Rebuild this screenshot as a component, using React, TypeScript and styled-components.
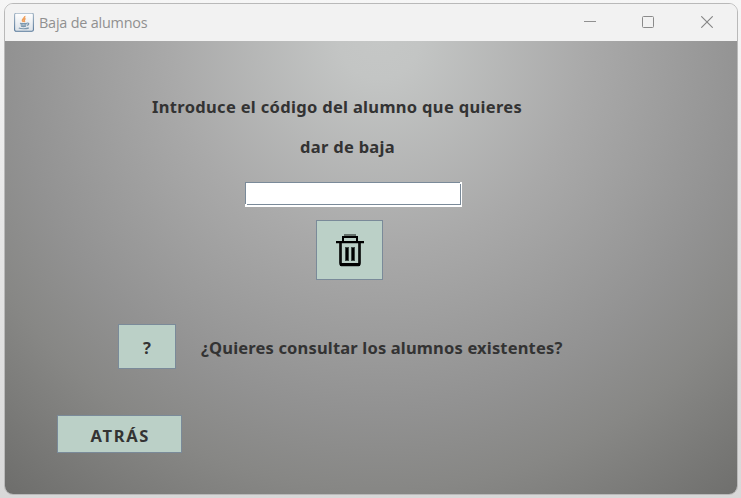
import React from "react";
import styled, { createGlobalStyle } from "styled-components";

const GlobalStyle = createGlobalStyle`
  * { box-sizing: border-box; }
  body { margin: 0; background: #e9e9e9; overflow: hidden; }
`;

const Desktop = styled.div`
  width: 741px;
  height: 498px;
  padding: 3px 3px 3px 4px;
  background: linear-gradient(#f6f6f6 0, #e6e6e6 45%, #d8d8d8 100%);
`;

const Window = styled.main`
  width: 734px;
  height: 492px;
  border: 1px solid #b9b9b9;
  border-radius: 9px;
  overflow: hidden;
  display: flex;
  flex-direction: column;
  background: #f2f2f2;
`;

const TitleBar = styled.header`
  height: 37px;
  flex: none;
  display: flex;
  align-items: center;
  padding-left: 9px;
  background: #f2f2f2;
`;

const Title = styled.span`
  flex: 1;
  margin-left: 5px;
  font: 14.4px/20px "Open Sans", "Noto Sans", sans-serif;
  letter-spacing: -0.2px;
  color: #909090;
`;

const WindowControls = styled.div`
  display: flex;
  padding-right: 1px;
`;

const Control = styled.button`
  width: 58.5px;
  height: 37px;
  padding: 0 0 1px;
  border: 0;
  background: none;
  display: flex;
  align-items: center;
  justify-content: center;
`;

const Content = styled.section`
  flex: 1;
  display: flex;
  flex-direction: column;
  background: radial-gradient(
    circle at 374px -2px,
    #c5c7c6 0,
    #c3c5c4 40px,
    #a9a9a9 210px,
    #929292 370px,
    #878785 450px,
    #6d6d6b 590px
  );
`;

const Label = styled.p<{ $left: number; $track: number }>`
  margin: 0 0 0 ${(p) => p.$left}px;
  font: 700 16.5px/40px "Noto Sans", "Open Sans", sans-serif;
  letter-spacing: ${(p) => p.$track}px;
  white-space: nowrap;
  color: #333;
`;

const Heading = styled.div`
  padding-top: 46px;
`;

/* Bevelled field: the line is left open at the top right and bottom left corners. */
const CodeField = styled.input`
  width: 217px;
  height: 25px;
  margin: 15px 0 0 240px;
  padding: 0 5px;
  border: 0;
  border-radius: 0;
  outline: 0;
  background:
    linear-gradient(#7a8a99, #7a8a99) 0 0 / 215px 1px no-repeat,
    linear-gradient(#7a8a99, #7a8a99) 0 0 / 1px 22px no-repeat,
    linear-gradient(#7a8a99, #7a8a99) 215px 2px / 1px 21px no-repeat,
    linear-gradient(#7a8a99, #7a8a99) 2px 22px / 214px 1px no-repeat,
    #fff;
  font: 14px "Noto Sans", sans-serif;
`;

const ActionButton = styled.button<{ $width: number; $height: number; $track?: number }>`
  flex: none;
  width: ${(p) => p.$width}px;
  height: ${(p) => p.$height}px;
  padding: 3px 0 0 ${(p) => p.$track ?? 0}px;
  border: 1px solid #7a8a99;
  border-radius: 0;
  background: #bbd0c7;
  display: flex;
  align-items: center;
  justify-content: center;
  font: 700 16.5px/20px "Noto Sans", "Open Sans", sans-serif;
  letter-spacing: ${(p) => p.$track ?? 0}px;
  color: #333;
`;

const IconButton = styled(ActionButton)`
  padding: 0;
`;

const DeleteRow = styled.div`
  padding: 13px 0 0 311px;
`;

const ConsultRow = styled.div`
  display: flex;
  align-items: center;
  padding: 44px 0 0 113px;

  ${Label} {
    padding-top: 2px;
  }
`;

const BackRow = styled.div`
  padding: 46px 0 0 52px;
`;

const JavaIcon = () => (
  <svg width="20" height="20" viewBox="0 0 20 20">
    <defs>
      <linearGradient id="tile" x2="0" y2="1">
        <stop stopColor="#fff" />
        <stop offset="1" stopColor="#dce2e8" />
      </linearGradient>
      <linearGradient id="edge" x2="0" y2="1">
        <stop stopColor="#a3b5c5" />
        <stop offset="1" stopColor="#56789a" />
      </linearGradient>
    </defs>
    <rect x=".6" y=".1" width="18.8" height="18.2" rx="1.6" fill="url(#tile)" stroke="url(#edge)" strokeWidth="1.1" />
    <path d="M10.800 3c.5 1.800-2.600 2.500-2.400 4.400.1.800.9 1 1.100 1.600M11.600 5.500c-1.500.7-1.900 1.300-1.200 2.100.4.500.1 1-.3 1.400" fill="none" stroke="#f0a05c" strokeWidth="1.500" />
    <path d="M6 10.200c2 .6 5 .6 7 0M6.500 11.800c2 .6 4.200.6 6 0M7 13.300c1.500.5 3.500.5 5 0M4.800 15c2 1 8 1 10-.1M13.200 10.200c2.200-.5 2 1.700-.2 2.200" fill="none" stroke="#7c98ae" strokeWidth="1.200" />
  </svg>
);

const TrashIcon = () => (
  <svg width="30" height="34" viewBox="0 0 30 34">
    <path d="M9 1h12v2H9z" fill="#64706b" />
    <path d="M8 8V4h14v4" fill="none" stroke="#000" strokeWidth="2" />
    <path d="M1 8h28v2.300H1z" />
    <path d="M5.500 10v20c0 1.500.5 2 2 2h15c1.500 0 2-.5 2-2V10" fill="none" stroke="#0b0d0c" strokeWidth="2.700" />
    <path d="M5 30h20v3H5z" />
    <path d="M10 14h4v14h-4zM16 14h4v14h-4z" fill="#3b4642" />
    <path d="M11 15h2v12h-2zM17 15h2v12h-2z" />
  </svg>
);

export default function App() {
  return (
    <>
      <GlobalStyle />
      <Desktop>
        <Window>
          <TitleBar>
            <JavaIcon />
            <Title>Baja de alumnos</Title>
            <WindowControls>
              <Control aria-label="Minimizar">
                <svg width="12" height="12"><path d="M0 5.500h12" stroke="#909090" /></svg>
              </Control>
              <Control aria-label="Maximizar">
                <svg width="12" height="12"><rect x=".5" y=".5" width="11" height="11" rx="1" fill="none" stroke="#8b8b8b" /></svg>
              </Control>
              <Control aria-label="Cerrar">
                <svg width="12" height="12"><path d="M.3.3l11.400 11.400M11.700.3L.3 11.700" stroke="#858585" strokeWidth="1.100" /></svg>
              </Control>
            </WindowControls>
          </TitleBar>
          <Content>
            <Heading>
              <Label $left={147} $track={0.32}>Introduce el código del alumno que quieres</Label>
              <Label $left={295} $track={0.3}>dar de baja</Label>
            </Heading>
            <CodeField aria-label="Código del alumno" />
            <DeleteRow>
              <IconButton $width={67} $height={60} aria-label="Dar de baja"><TrashIcon /></IconButton>
            </DeleteRow>
            <ConsultRow>
              <ActionButton $width={58} $height={45}>?</ActionButton>
              <Label $left={25} $track={0.17}>¿Quieres consultar los alumnos existentes?</Label>
            </ConsultRow>
            <BackRow>
              <ActionButton $width={125} $height={38} $track={1.7}>ATRÁS</ActionButton>
            </BackRow>
          </Content>
        </Window>
      </Desktop>
    </>
  );
}
